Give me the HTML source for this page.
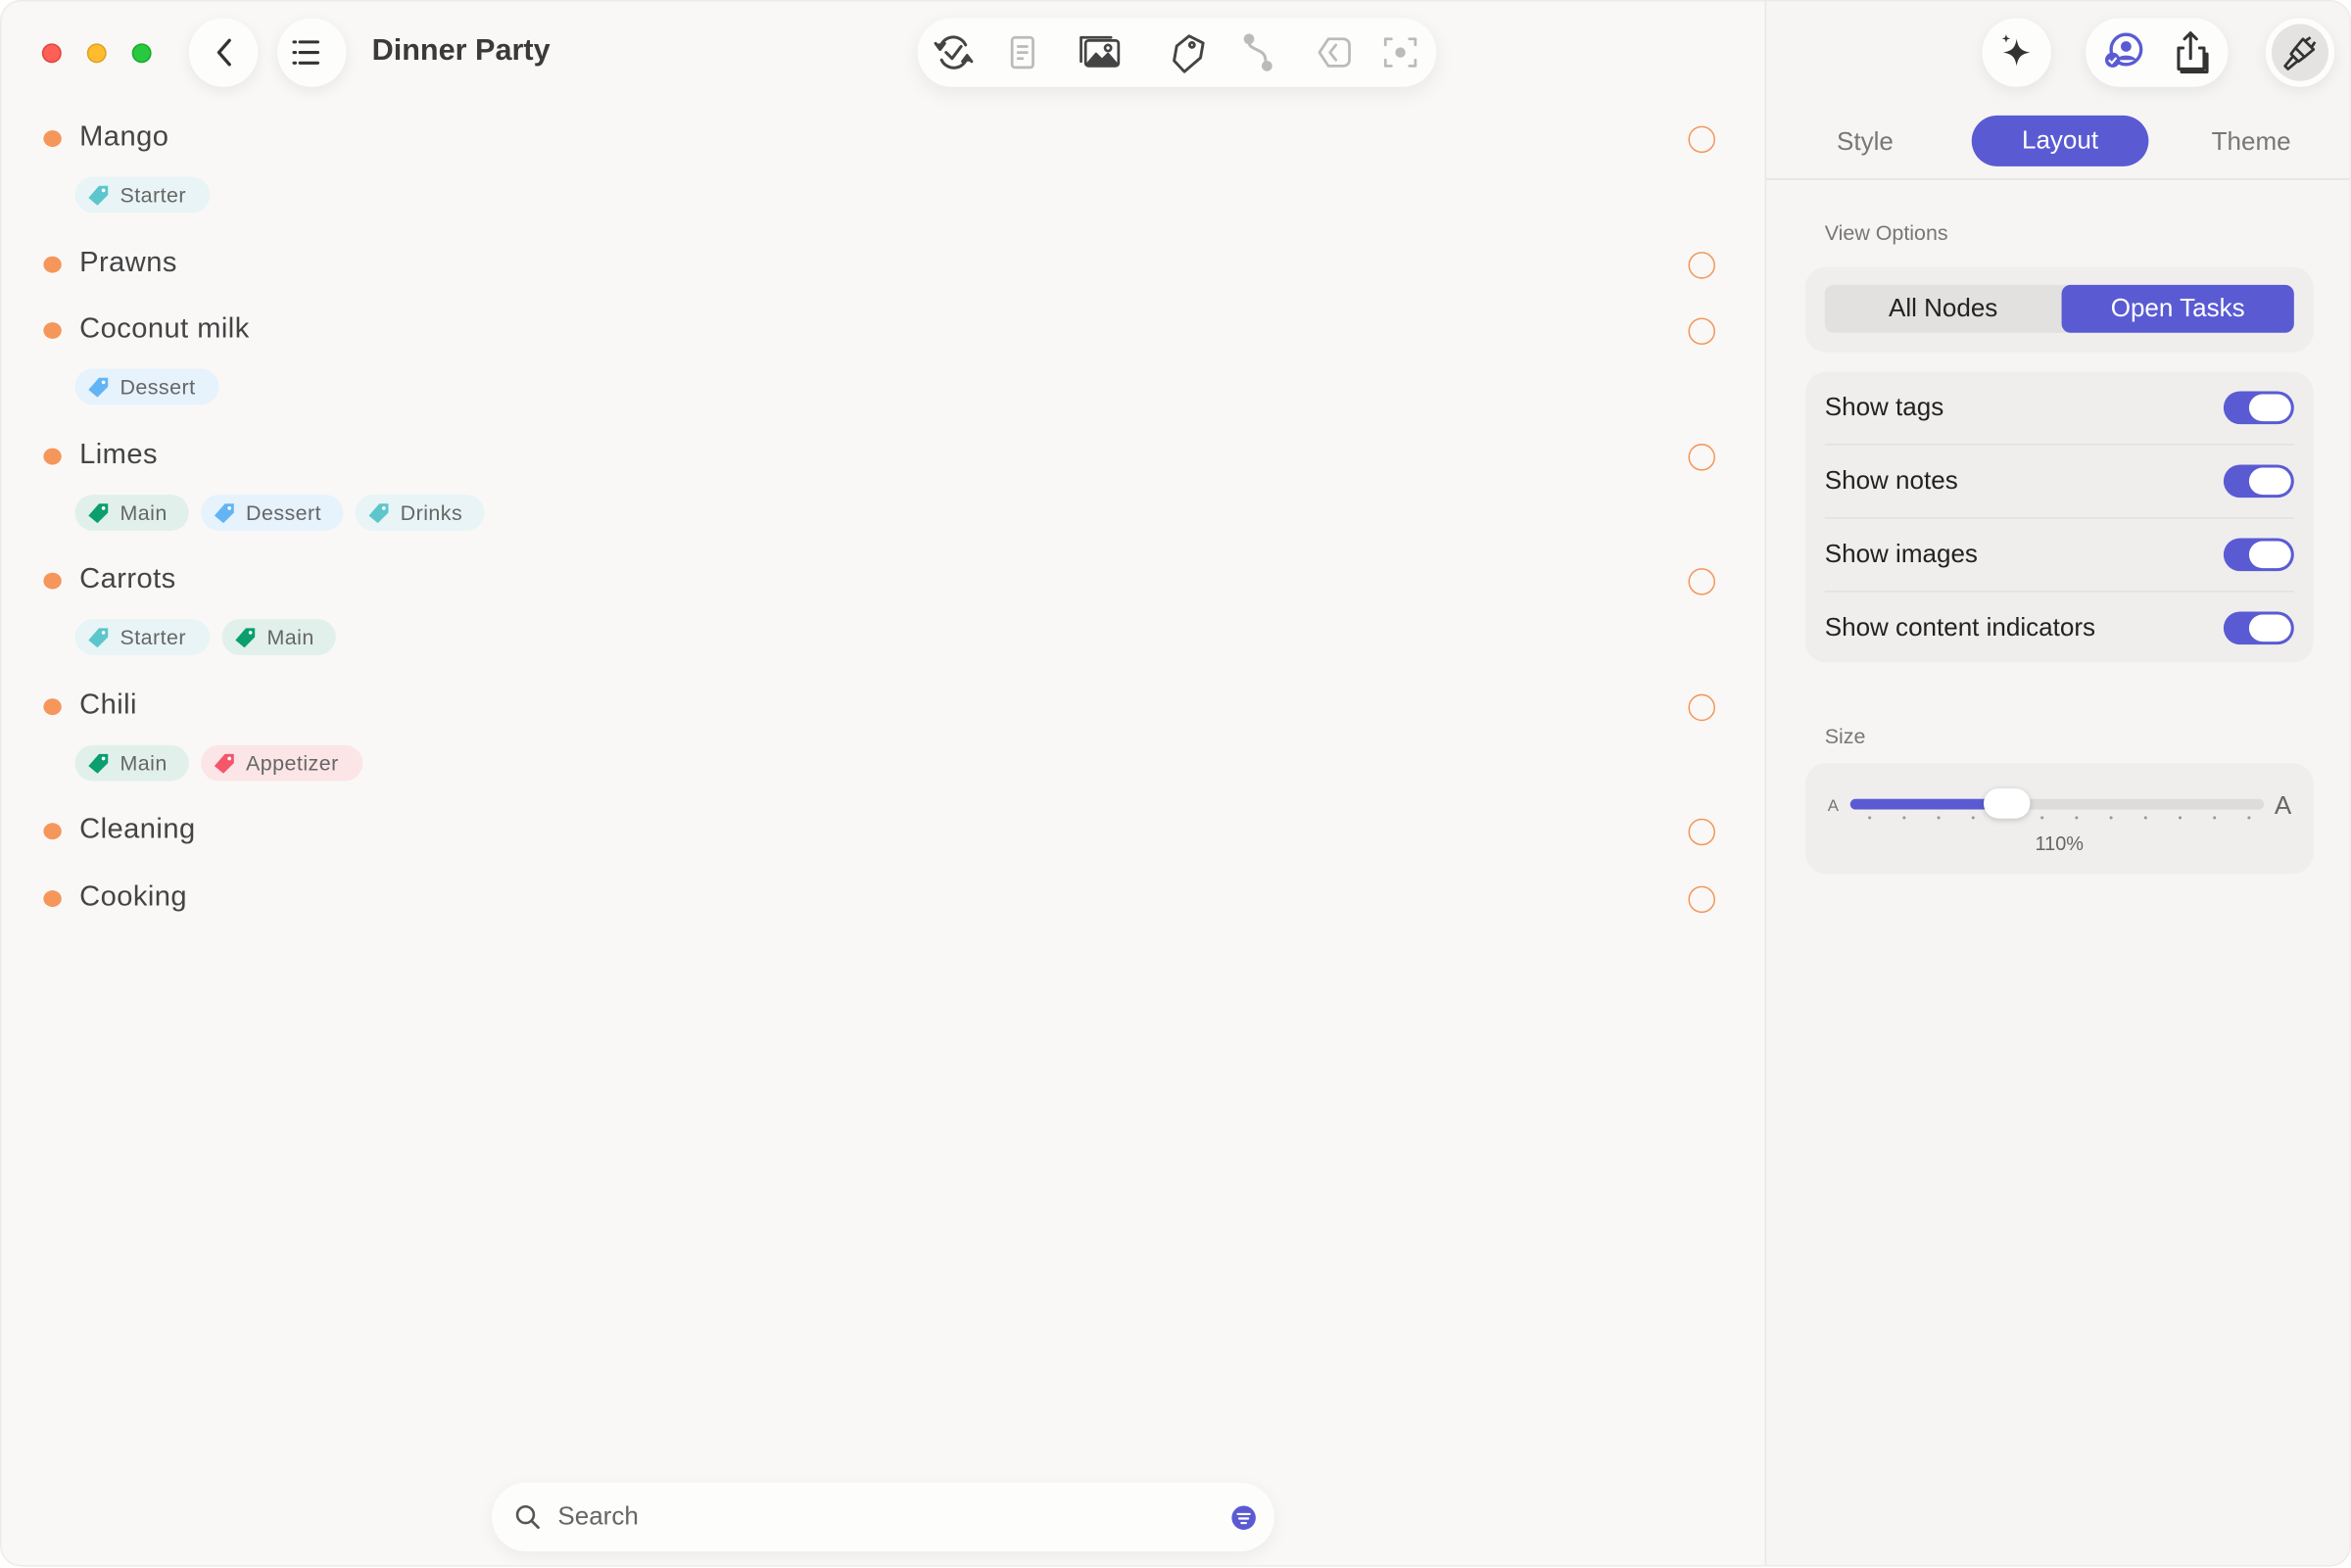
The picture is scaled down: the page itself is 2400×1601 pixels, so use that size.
<!DOCTYPE html>
<html><head><meta charset="utf-8"><style>
*{margin:0;padding:0;box-sizing:border-box}
html,body{width:2400px;height:1600px;overflow:hidden;background:#fff}
#w{position:absolute;left:0;top:0;width:1568px;height:1046px;transform:scale(1.5306);transform-origin:0 0;font-family:"Liberation Sans",sans-serif;}
.win{position:absolute;left:0;top:0;width:1568px;height:1045px;background:#f9f8f7;border-radius:14px;overflow:hidden;border:1px solid #ecebea}
.abs{position:absolute}
.dot{position:absolute;width:13px;height:13px;border-radius:50%;top:28px}
.cbtn{position:absolute;width:46px;height:46px;border-radius:50%;background:#fdfdfc;box-shadow:0 3px 10px rgba(0,0,0,.07)}
.item{position:absolute;left:52px;font-size:19px;color:#444;line-height:24px;letter-spacing:.3px}
.bul{position:absolute;left:28px;width:12px;height:11px;border-radius:50%;background:#f5965a}
.ring{position:absolute;left:1125px;width:18px;height:18px;border-radius:50%;border:1.6px solid #f5965a}
.tag{position:absolute;height:24px;border-radius:12px;font-size:14px;color:#666;line-height:24px;padding-left:30px;letter-spacing:.3px}
.tag svg{position:absolute;left:8px;top:5px}
.panel{position:absolute;left:1176px;top:0;width:392px;height:1045px;background:#f6f5f4;border-left:1px solid #e8e7e6}
.box{position:absolute;left:26px;width:339px;background:#efeeed;border-radius:14px}
.row{position:absolute;left:13px;font-size:17px;color:#222}
.tg{position:absolute;left:279px;width:47px;height:22px;border-radius:11px;background:#5a5bd3}
.tg::after{content:"";position:absolute;right:2px;top:2px;width:28px;height:18px;border-radius:9px;background:#fff}
.sep{position:absolute;left:13px;width:313px;height:1px;background:#e2e1e0}
</style></head><body><div id="w"><div class="win">
<div class="dot" style="left:27px;background:#fe5f57;border:1px solid #e1453f"></div>
<div class="dot" style="left:57px;background:#febc2e;border:1px solid #dfa023"></div>
<div class="dot" style="left:87px;background:#28c840;border:1px solid #1aab29"></div>
<div class="cbtn" style="left:125px;top:11px"><svg width="46" height="46"><path d="M27 15 L20 23 L27 31" fill="none" stroke="#333" stroke-width="2.2" stroke-linecap="round" stroke-linejoin="round"/></svg></div>
<div class="cbtn" style="left:184px;top:11px"><svg width="46" height="46"><g stroke="#333" stroke-width="2" stroke-linecap="round"><path d="M11 16h1M15 16h12M15 23h12M11 23h1M15 30h12M11 30h1"/></g></svg></div>
<div class="abs" style="left:247px;top:22px;font-size:20px;font-weight:bold;color:#3a3a3a">Dinner Party</div>
<div class="abs" style="left:611px;top:11px;width:346px;height:46px;border-radius:23px;background:#fdfdfc;box-shadow:0 4px 14px rgba(0,0,0,.07)"></div>
<svg class="abs" style="left:611px;top:11px" width="346" height="46" fill="none" stroke-linecap="round" stroke-linejoin="round">
<g stroke="#444" stroke-width="2"><path d="M15 20a9 9 0 0 1 17-2M33 26a9 9 0 0 1-17 2"/><path d="M12 17l3 4 3-4M36 29l-3-4-3 4" fill="#444"/><path d="M19 23l4 4 6-8"/></g>
<g stroke="#bbb" stroke-width="1.8"><rect x="63" y="13" width="14" height="20" rx="2"/><path d="M67 19h6M67 23h6M67 27h3"/></g>
<g stroke="#444" stroke-width="1.8"><rect x="112" y="15" width="22" height="17" rx="2"/><path d="M109 29V13h20"/><path d="M113 31l6-7 4 4 4-4 6 7z" fill="#444"/><circle cx="127" cy="20" r="2"/></g>
<g stroke="#444" stroke-width="1.9"><path d="M179 12l10 3 0 10-9 11-8-6 0-10z" transform="rotate(10 180 24)"/><circle cx="183" cy="18" r="1.6"/></g>
<g stroke="#bbb" stroke-width="2"><circle cx="221" cy="14" r="2.5" fill="#bbb"/><path d="M221 16c0 6 11 4 11 12"/><circle cx="233" cy="32" r="2.5" fill="#bbb"/></g>
<g stroke="#bbb" stroke-width="1.8"><path d="M268 23l6-9h10a4 4 0 0 1 4 4v10a4 4 0 0 1-4 4h-10z"/><path d="M279 18l-4 5 4 5"/></g>
<g stroke="#bbb" stroke-width="1.8"><path d="M312 18v-4h4M328 14h4v4M332 28v4h-4M316 32h-4v-4"/><circle cx="322" cy="23" r="2.5" fill="#bbb"/></g>
</svg>

<div class="bul" style="top:86px"></div><div class="item" style="top:79px">Mango</div><div class="ring" style="top:83px"></div>
<div class="tag" style="left:49px;top:117px;width:90px;background:#e8f4f5"><svg width="16" height="14"><path d="M1 9l7-8h6v6l-7 7z" fill="#5cc6cc"/><circle cx="11" cy="4" r="1.2" fill="#fff"/></svg>Starter</div>
<div class="bul" style="top:170px"></div><div class="item" style="top:163px">Prawns</div><div class="ring" style="top:167px"></div>
<div class="bul" style="top:214px"></div><div class="item" style="top:207px">Coconut milk</div><div class="ring" style="top:211px"></div>
<div class="tag" style="left:49px;top:245px;width:96px;background:#e6f2fc"><svg width="16" height="14"><path d="M1 9l7-8h6v6l-7 7z" fill="#62b5f5"/><circle cx="11" cy="4" r="1.2" fill="#fff"/></svg>Dessert</div>
<div class="bul" style="top:298px"></div><div class="item" style="top:291px">Limes</div><div class="ring" style="top:295px"></div>
<div class="tag" style="left:49px;top:329px;width:76px;background:#e1f0ea"><svg width="16" height="14"><path d="M1 9l7-8h6v6l-7 7z" fill="#0b9e6e"/><circle cx="11" cy="4" r="1.2" fill="#fff"/></svg>Main</div>
<div class="tag" style="left:133px;top:329px;width:95px;background:#e6f2fc"><svg width="16" height="14"><path d="M1 9l7-8h6v6l-7 7z" fill="#62b5f5"/><circle cx="11" cy="4" r="1.2" fill="#fff"/></svg>Dessert</div>
<div class="tag" style="left:236px;top:329px;width:86px;background:#e8f4f5"><svg width="16" height="14"><path d="M1 9l7-8h6v6l-7 7z" fill="#5cc6cc"/><circle cx="11" cy="4" r="1.2" fill="#fff"/></svg>Drinks</div>
<div class="bul" style="top:381px"></div><div class="item" style="top:374px">Carrots</div><div class="ring" style="top:378px"></div>
<div class="tag" style="left:49px;top:412px;width:90px;background:#e8f4f5"><svg width="16" height="14"><path d="M1 9l7-8h6v6l-7 7z" fill="#5cc6cc"/><circle cx="11" cy="4" r="1.2" fill="#fff"/></svg>Starter</div>
<div class="tag" style="left:147px;top:412px;width:76px;background:#e1f0ea"><svg width="16" height="14"><path d="M1 9l7-8h6v6l-7 7z" fill="#0b9e6e"/><circle cx="11" cy="4" r="1.2" fill="#fff"/></svg>Main</div>
<div class="bul" style="top:465px"></div><div class="item" style="top:458px">Chili</div><div class="ring" style="top:462px"></div>
<div class="tag" style="left:49px;top:496px;width:76px;background:#e1f0ea"><svg width="16" height="14"><path d="M1 9l7-8h6v6l-7 7z" fill="#0b9e6e"/><circle cx="11" cy="4" r="1.2" fill="#fff"/></svg>Main</div>
<div class="tag" style="left:133px;top:496px;width:108px;background:#fce5e7"><svg width="16" height="14"><path d="M1 9l7-8h6v6l-7 7z" fill="#f4566a"/><circle cx="11" cy="4" r="1.2" fill="#fff"/></svg>Appetizer</div>
<div class="bul" style="top:548px"></div><div class="item" style="top:541px">Cleaning</div><div class="ring" style="top:545px"></div>
<div class="bul" style="top:593px"></div><div class="item" style="top:586px">Cooking</div><div class="ring" style="top:590px"></div>

<div class="abs" style="left:327px;top:988px;width:522px;height:46px;border-radius:23px;background:#fdfdfc;box-shadow:0 3px 12px rgba(0,0,0,.06)">
<svg class="abs" style="left:15px;top:14px" width="18" height="18"><circle cx="7.5" cy="7.5" r="5.5" fill="none" stroke="#555" stroke-width="1.7"/><path d="M11.5 11.5l4.5 4.5" stroke="#555" stroke-width="1.8" stroke-linecap="round"/></svg>
<div class="abs" style="left:44px;top:13px;font-size:17px;color:#666">Search</div>
<svg class="abs" style="left:493px;top:15px" width="17" height="17"><circle cx="8.5" cy="8.5" r="8" fill="#5a5bd3"/><path d="M4.5 6h8M5.5 9h6M7 12h3" stroke="#fff" stroke-width="1.4" stroke-linecap="round"/></svg></div>

<div class="panel">
<div class="cbtn" style="left:144px;top:11px"><svg width="46" height="46"><path d="M23 14c1 6 3 8 9 9-6 1-8 3-9 9-1-6-3-8-9-9 6-1 8-3 9-9z" fill="#333"/><path d="M16 11l.7 2 2 .7-2 .7-.7 2-.7-2-2-.7 2-.7z" fill="#333"/></svg></div>
<div class="abs" style="left:213px;top:11px;width:95px;height:46px;border-radius:23px;background:#fdfdfc;box-shadow:0 3px 10px rgba(0,0,0,.07)">
<svg width="95" height="46"><circle cx="27" cy="21" r="10" fill="none" stroke="#5a5bd3" stroke-width="2.2"/><circle cx="27" cy="19" r="3.5" fill="#5a5bd3"/><path d="M20 28c3-4 11-4 14 0" fill="#5a5bd3"/><circle cx="18" cy="28" r="5" fill="#5a5bd3"/><path d="M15.5 28l2 2 3-3.5" stroke="#fff" stroke-width="1.4" fill="none"/>
<g fill="none" stroke="#333" stroke-width="2" stroke-linejoin="round" stroke-linecap="round"><path d="M65 20h-3v14h17v-14h-3"/><path d="M70 27V10M66 14l4-4 4 4"/><path d="M64 34v2h17v-12h-2"/></g></svg></div>
<div class="cbtn" style="left:333px;top:11px"><div class="abs" style="left:4px;top:4px;width:38px;height:38px;border-radius:50%;background:#e4e3e2"></div>
<svg class="abs" width="46" height="46"><g fill="none" stroke="#333" stroke-width="1.8" stroke-linejoin="round"><path d="M25 14l7 7-6 5-6-6z"/><path d="M20 20l-3 4 5 5 4-3"/><path d="M18 26l-5 6 2 2 6-5"/><path d="M27 15l3-2M31 19l2-3"/></g></svg></div>

<div class="abs" style="left:47px;top:84px;font-size:17px;color:#777">Style</div>
<div class="abs" style="left:137px;top:76px;width:118px;height:34px;border-radius:17px;background:#5a5bd3;color:#fff;font-size:17px;text-align:center;line-height:34px">Layout</div>
<div class="abs" style="left:297px;top:84px;font-size:17px;color:#777">Theme</div>
<div class="abs" style="left:0;top:118px;width:392px;height:1px;background:#e3e2e1"></div>

<div class="abs" style="left:39px;top:146px;font-size:14px;color:#777">View Options</div>
<div class="box" style="top:177px;height:57px">
<div class="abs" style="left:13px;top:12px;width:313px;height:32px;border-radius:6px;background:#e2e1e0"></div>
<div class="abs" style="left:171px;top:12px;width:155px;height:32px;border-radius:6px;background:#5a5bd3;color:#fff;font-size:17px;text-align:center;line-height:32px">Open Tasks</div>
<div class="abs" style="left:13px;top:12px;width:158px;font-size:17px;color:#222;text-align:center;line-height:32px">All Nodes</div>
</div>
<div class="box" style="top:247px;height:194px">
<div class="row" style="top:14px">Show tags</div><div class="tg" style="top:13px"></div><div class="sep" style="top:48px"></div>
<div class="row" style="top:63px">Show notes</div><div class="tg" style="top:62px"></div><div class="sep" style="top:97px"></div>
<div class="row" style="top:112px">Show images</div><div class="tg" style="top:111px"></div><div class="sep" style="top:146px"></div>
<div class="row" style="top:161px">Show content indicators</div><div class="tg" style="top:160px"></div>
</div>
<div class="abs" style="left:39px;top:482px;font-size:14px;color:#777">Size</div>
<div class="box" style="top:508px;height:74px">
<div class="abs" style="left:15px;top:23px;font-size:11px;color:#777">A</div>
<div class="abs" style="left:30px;top:24px;width:276px;height:7px;border-radius:4px;background:#dddcdb"></div>
<div class="abs" style="left:30px;top:24px;width:105px;height:7px;border-radius:4px;background:#5a5bd3"></div>
<svg class="abs" style="left:30px;top:35px" width="280" height="4"><g fill="#999"><circle cx="13" cy="1.5" r="1"/><circle cx="36" cy="1.5" r="1"/><circle cx="59" cy="1.5" r="1"/><circle cx="82" cy="1.5" r="1"/><circle cx="128" cy="1.5" r="1"/><circle cx="151" cy="1.5" r="1"/><circle cx="174" cy="1.5" r="1"/><circle cx="197" cy="1.5" r="1"/><circle cx="220" cy="1.5" r="1"/><circle cx="243" cy="1.5" r="1"/><circle cx="266" cy="1.5" r="1"/></g></svg>
<div class="abs" style="left:119px;top:17px;width:31px;height:20px;border-radius:10px;background:#fff;box-shadow:0 1px 4px rgba(0,0,0,.2)"></div>
<div class="abs" style="left:313px;top:19px;font-size:17px;color:#666">A</div>
<div class="abs" style="left:0;top:46px;width:339px;text-align:center;font-size:13px;color:#666">110%</div>
</div>
</div>
</div></div></body></html>
